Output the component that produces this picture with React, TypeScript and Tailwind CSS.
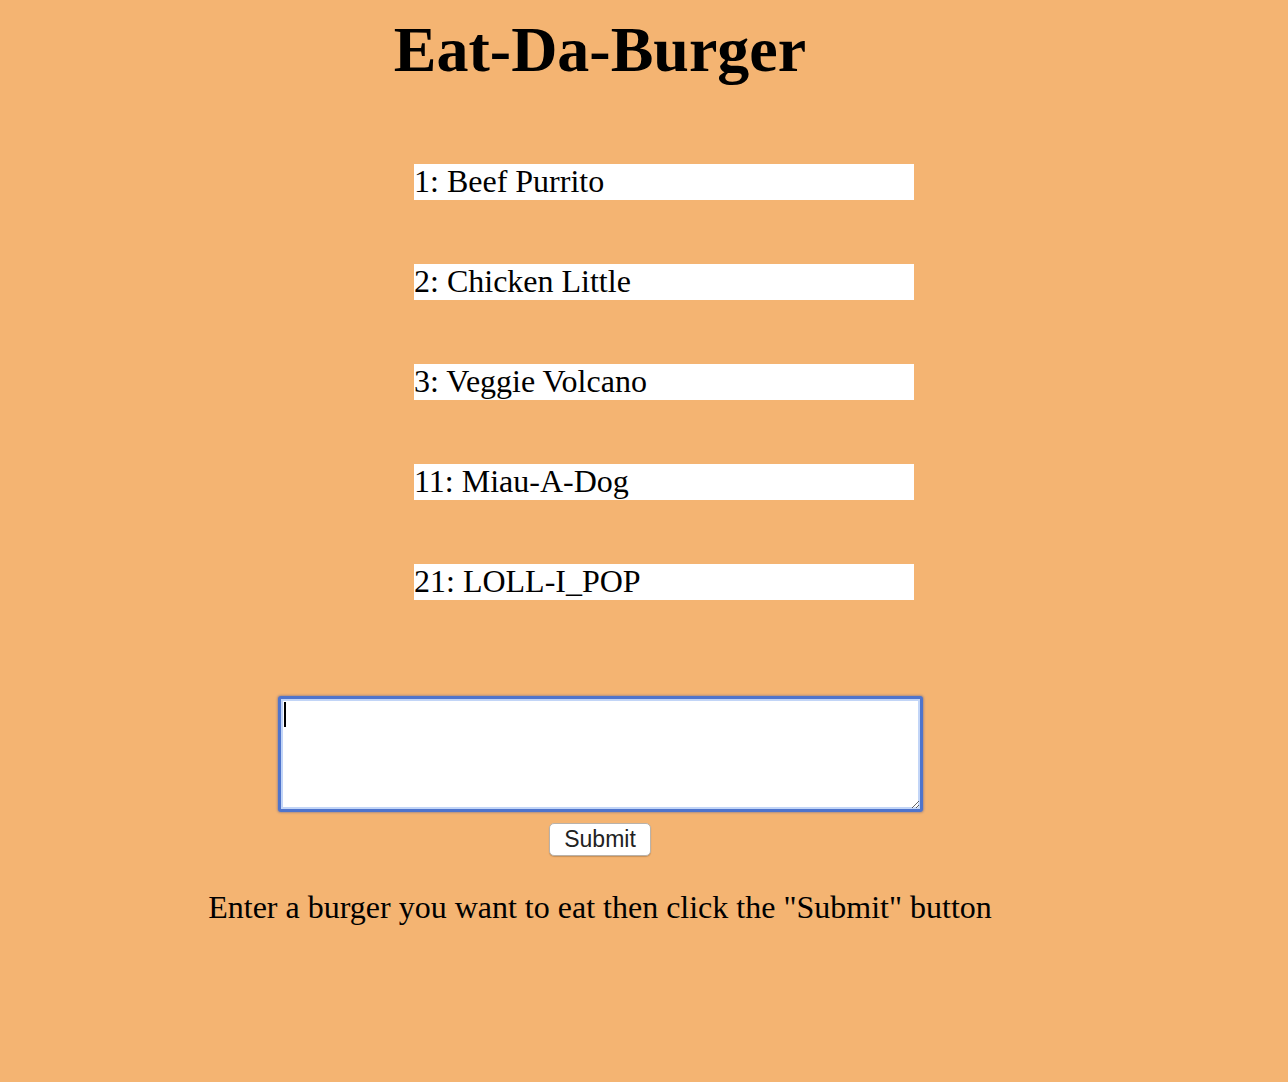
import React, { useState } from 'react';

const burgers = [
  { id: 1, name: 'Beef Purrito' },
  { id: 2, name: 'Chicken Little' },
  { id: 3, name: 'Veggie Volcano' },
  { id: 11, name: 'Miau-A-Dog' },
  { id: 21, name: 'LOLL-I_POP' },
];

export default function App() {
  const [text, setText] = useState('');

  return (
    <div className="min-h-[1082px] w-full bg-[#f4b472] text-black font-['Liberation_Serif',serif]">
      <div className="w-[1200px] pt-[14px]">
        <h1 className="text-center text-[64px] leading-[72px] font-bold">Eat-Da-Burger</h1>

        <ul className="ml-[414px] mt-[78px] flex w-[500px] flex-col gap-[64px]">
          {burgers.map(b => (
            <li key={b.id} className="h-[36px] bg-white text-[32px] leading-[34px]">
              {b.id}: {b.name}
            </li>
          ))}
        </ul>

        <form className="mt-[96px] flex flex-col items-center" onSubmit={e => e.preventDefault()}>
          <div className="relative">
            <textarea
              value={text}
              onChange={e => setText(e.target.value)}
              className="block h-[116px] w-[645px] rounded-[3px] border-[3px] border-[#4f74cc] bg-white px-[3px] py-[2px] text-[16px] outline-none shadow-[inset_0_0_0_2px_#c2d5f7,0_0_2px_1px_rgba(90,100,150,0.45)]"
            />
            {text === '' && (
              <span className="pointer-events-none absolute left-[6px] top-[6px] h-[25px] w-[2px] bg-black" />
            )}
          </div>
          <button
            type="submit"
            className="mt-[11px] h-[33px] w-[102px] rounded-[5px] border border-[#b9b2aa] bg-white font-['Liberation_Sans',Arial,sans-serif] text-[23px] leading-none text-[#222] shadow-[0_1px_1px_rgba(120,80,40,0.35)]"
          >
            Submit
          </button>
        </form>

        <p className="mt-[33px] text-center text-[32px] leading-[36px]">
          Enter a burger you want to eat then click the "Submit" button
        </p>
      </div>
    </div>
  );
}
